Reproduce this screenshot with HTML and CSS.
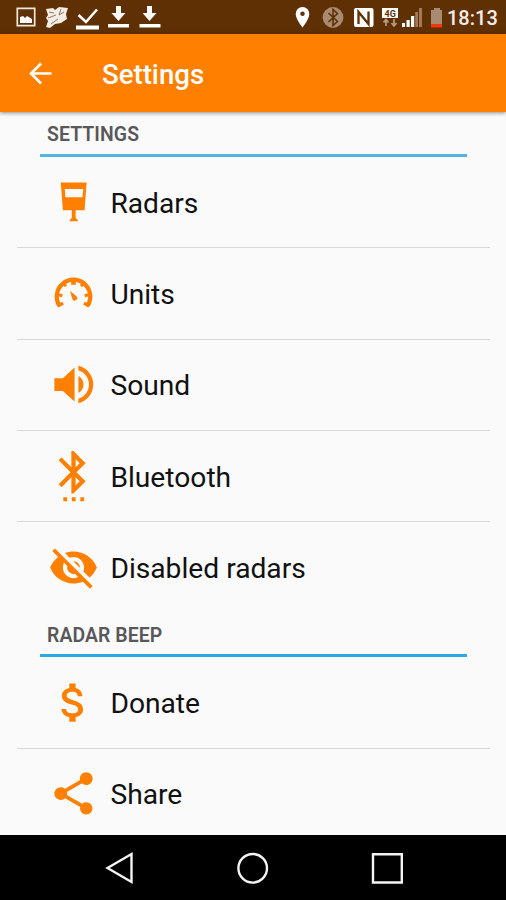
FILE: index.html
```html
<!DOCTYPE html>
<html lang="en">
<head>
<meta charset="utf-8">
<title>Settings</title>
<link rel="stylesheet" href="styles.css">
</head>
<body>
<div class="screen">
  <div class="status">
    <svg class="status-icons" width="165" height="34" viewBox="0 0 165 34" fill="#fff">
      <path d="M17.300 8.300h17.400v17.400H17.300z" fill="none" stroke="#f0e7df" stroke-width="1.700"/>
      <path d="M20 23v-6l3-1 2 2 2-2 5 3v4z"/>
      <path d="M46 9l7-1 2 2 4-3 9 1-2 6 1 5-6 4-6 1-5 4-4-1 2-6-2-3 2-3z" fill="#f3ece5"/>
      <path d="M49 12l5 1M61 9l-2 6 5-3M48 18l8-3M51 24l7-5" fill="none" stroke="#795943" stroke-width=".8"/>
      <path d="M78.500 15l7.500 7 11-12.500" fill="none" stroke="#fff" stroke-width="2.600"/>
      <path d="M76 25.500h23v4H76zM108 24h21v3.500h-21zM139.500 24h21v3.500h-21z"/>
      <path d="M116 6h5v7h4.500l-7 8-7-8h4.500zM147 6h5v7h4.500l-7 8-7-8h4.500z"/>
    </svg>
    <svg class="status-icons" width="152" height="34" viewBox="290 0 152 34" fill="#fff">
      <path d="M302.500 7a6.800 6.800 0 0 0-6.800 7c0 5 6.800 13.500 6.800 13.500s6.800-8.500 6.800-13.500a6.800 6.800 0 0 0-6.800-7zm0 4.500a2.200 2.200 0 1 1 0 4.500 2.200 2.200 0 0 1 0-4.500z" fill-rule="evenodd"/>
      <circle cx="333" cy="17.500" r="10.400" fill="#a98b72"/>
      <path d="M328.500 13l9 8.500-4.500 4v-16l4.500 4-9 8.500" fill="none" stroke="#5f3003" stroke-width="1.600"/>
      <rect x="354" y="8" width="19.500" height="19" rx="2"/>
      <path d="M358.500 24V12l10 12V11.500" fill="none" stroke="#5f3003" stroke-width="2.300"/>
      <path d="M382 8h16v10h-16z"/>
      <text class="net" x="384.500" y="16.500" fill="#5f3003">4G</text>
      <path d="M386 19v7M383.500 22.500l2.500-3 2.500 3M394 19v7M391.500 23l2.500 3 2.500-3" fill="none" stroke="#b99c86" stroke-width="1.700"/>
      <path d="M402 23h3v4h-3zM406.500 20h3.200v7h-3.200zM411 16h3.200v11H411z"/>
      <path d="M415.200 12h2.800v15h-2.800zM419 8h3v19h-3z" fill="#a27a58"/>
      <path d="M434 8h6v2h3v14.500h-12V10h3z" fill="#a98b72"/>
      <path d="M431 24h12v3.500h-12z" fill="#f0370d"/>
    </svg>
    <span class="clock">18:13</span>
  </div>
  <header class="appbar">
    <svg class="back" width="30" height="30" viewBox="0 0 30 30" fill="none" stroke="#fff" stroke-width="2.600"><path d="M27.500 15.500H7M17 5.500l-10 10 10 10"/></svg>
    <h1>Settings</h1>
  </header>
  <main>
    <h2>SETTINGS</h2>
    <div class="list">
      <div class="row"><svg viewBox="0 0 24 24"><path fill-rule="evenodd" d="M6 2.600h12.200l-1 13H13v3.500l1.300 1.700H10l1.200-1.700v-3.500H7zM7.900 5.600l.3 3.900h8l.4-3.900z"/></svg><span>Radars</span></div>
      <div class="row"><svg viewBox="0 0 24 24"><path d="M5.300 17.600A7.900 7.900 0 1 1 18.700 17.600" fill="none" stroke="currentColor" stroke-width="2"/><path d="M3.700 16.700l3.100-.7.700 1.200-2.500 1.400zM20.300 16.700l-3.100-.7-.7 1.200 2.500 1.400zM4 11.700l3 .6-.5 1.500-2.800-.7zM20 11.700l-3 .6.500 1.500 2.800-.7zM6.300 7.200l1.200-1 1.500 1.800-1 1zM17.700 7.200l-1.200-1L15 8l1 1zM10.900 5h2.200v2.900h-2.200zM10.300 10.700l3.200 2.700a1.200 1.200 0 0 1-1.900 1.500z"/></svg><span>Units</span></div>
      <div class="row"><svg viewBox="0 0 24 24"><path d="M3 9v6h4l5.500 5V4L7 9zM14.300 7.970v8.050C15.700 15.300 16.700 13.800 16.700 12s-1-3.300-2.400-4.030zM14.300 3.200v2.100c2.900.9 5 3.500 5 6.700s-2.100 5.800-5 6.700v2.100c4-.9 7-4.500 7-8.800s-3-7.900-7-8.800z"/></svg><span>Sound</span></div>
      <div class="row"><svg viewBox="0 0 24 24"><path d="M11.200 23.600h1.800v-1.800h-1.800zm-4 0H9v-1.800H7.200zm8 0H17v-1.800h-1.800zm2.510-17.890L12 0h-1v7.590L6.410 3 5 4.410 10.590 10 5 15.590 6.410 17 11 12.410V20h1l5.710-5.710-4.300-4.290 4.300-4.290zM13 3.830l1.880 1.880L13 7.590V3.830zm1.880 10.460L13 16.170v-3.760l1.880 1.880z"/></svg><span>Bluetooth</span></div>
      <div class="row"><svg viewBox="0 0 24 24"><path d="M12 7c2.760 0 5 2.240 5 5 0 .65-.13 1.260-.36 1.830l2.920 2.920c1.510-1.260 2.700-2.890 3.430-4.750-1.730-4.390-6-7.500-11-7.500-1.400 0-2.740.25-3.980.7l2.160 2.160C10.740 7.130 11.350 7 12 7zM2 4.270l2.280 2.280.46.460C3.080 8.300 1.780 10.020 1 12c1.730 4.390 6 7.500 11 7.500 1.550 0 3.030-.3 4.380-.84l.42.420L19.730 22 21 20.730 3.270 3 2 4.270zM7.530 9.800l1.550 1.550c-.05.210-.08.430-.08.650 0 1.660 1.340 3 3 3 .22 0 .44-.03.650-.08l1.550 1.550c-.67.330-1.410.530-2.200.530-2.760 0-5-2.240-5-5 0-.79.200-1.530.530-2.200zm4.310-.78l3.150 3.150.02-.16c0-1.660-1.340-3-3-3l-.17.010z"/></svg><span>Disabled radars</span></div>
    </div>
    <h2>RADAR BEEP</h2>
    <div class="list">
      <div class="row"><svg viewBox="0 0 24 24"><path d="M11.800 10.900c-2.270-.59-3-1.200-3-2.150 0-1.090 1.010-1.850 2.700-1.850 1.780 0 2.440.85 2.500 2.100h2.210c-.07-1.720-1.120-3.300-3.210-3.810V3h-3v2.160c-1.940.42-3.500 1.680-3.500 3.610 0 2.310 1.910 3.460 4.700 4.130 2.500.6 3 1.480 3 2.410 0 .69-.49 1.790-2.700 1.790-2.060 0-2.870-.92-2.980-2.100h-2.200c.12 2.190 1.760 3.420 3.680 3.830V21h3v-2.150c1.950-.37 3.500-1.500 3.500-3.550 0-2.840-2.430-3.810-4.700-4.400z"/></svg><span>Donate</span></div>
      <div class="row"><svg viewBox="0 0 24 24"><path d="M18 16.080c-.76 0-1.440.3-1.960.77L8.910 12.700c.05-.23.090-.46.090-.7s-.04-.47-.09-.7l7.050-4.110c.54.500 1.250.810 2.040.810 1.660 0 3-1.340 3-3s-1.340-3-3-3-3 1.340-3 3c0 .24.040.470.090.700L8.040 9.810C7.500 9.310 6.790 9 6 9c-1.660 0-3 1.340-3 3s1.340 3 3 3c.79 0 1.500-.31 2.040-.81l7.120 4.160c-.05.210-.08.430-.08.650 0 1.610 1.310 2.920 2.920 2.920s2.920-1.310 2.920-2.920-1.310-2.920-2.920-2.920z"/></svg><span>Share</span></div>
    </div>
  </main>
  <nav>
    <svg width="506" height="65" viewBox="0 835 506 65" fill="none" stroke="#f4f4f4" stroke-width="2.400"><path d="M107.500 868l24-14v28z"/><circle cx="252.700" cy="868.300" r="14.300"/><path d="M373 854.300h28.800v28.200H373z"/></svg>
  </nav>
</div>
</body>
</html>
```
FILE: styles.css
```css
* { box-sizing: border-box; }
body { margin: 0; font-family: Roboto, "Liberation Sans", sans-serif; }
h1, h2 { margin: 0; }
svg { display: block; flex: none; }
.screen {
  width: 506px;
  height: 900px;
  display: flex;
  flex-direction: column;
  overflow: hidden;
  background: #fafafa;
}
.status {
  height: 34px;
  flex: none;
  display: flex;
  justify-content: space-between;
  background: #5f3003;
}
.status-icons:nth-child(2) { margin-left: auto; }
.net { font: bold 9px Roboto, sans-serif; }
.clock {
  width: 64px;
  padding-left: 5px;
  font-size: 20px;
  font-weight: 500;
  line-height: 36px;
  color: #f4eee9;
  white-space: nowrap;
}
.appbar {
  height: 78px;
  flex: none;
  display: flex;
  align-items: center;
  padding-left: 24px;
  gap: 48px;
  background: #ff8000;
  box-shadow: 0 1px 4px rgba(0, 0, 0, .45);
  z-index: 1;
}
h1 {
  padding-top: 4px;
  font-size: 27.6px;
  font-weight: 500;
  line-height: 32px;
  color: #fff;
}
main { flex: 1; min-height: 0; overflow: hidden; }
h2 {
  width: 427px;
  height: 45px;
  margin-left: 40px;
  padding: 11px 7px 0;
  border-bottom: 3px solid #55b4e2;
  font-size: 19.4px;
  font-weight: 600;
  line-height: 24px;
  letter-spacing: .1px;
  color: #58585a;
}
.list { margin: 0 16px 0 17px; }
.list + h2 { border-color: #2baae1; height: 44px; }
.row {
  height: 91.3px;
  display: flex;
  align-items: center;
  padding-left: 31px;
  gap: 11.4px;
  border-bottom: 1.3px solid #d8d8d8;
  font-size: 28.2px;
  color: #111;
}
.row:last-child { border-bottom-color: transparent; }
.row svg {
  width: 51px;
  height: 51px;
  color: #ff8000;
  fill: #ff8000;
}
.row span { padding-top: 2px; }
nav { height: 65px; flex: none; background: #000; }
```
